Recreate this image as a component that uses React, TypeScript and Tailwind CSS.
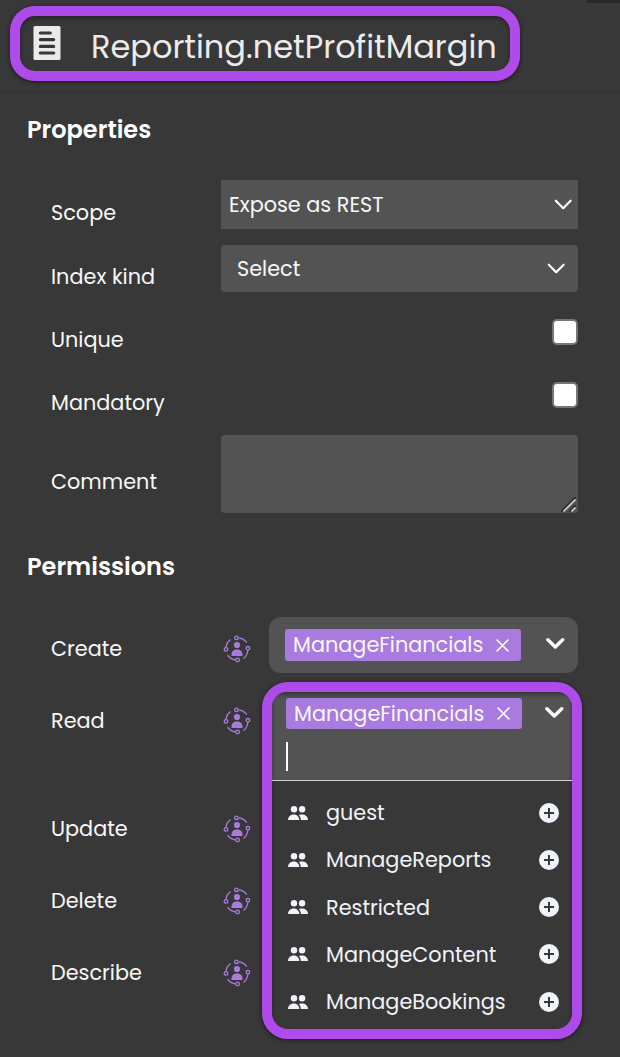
import type { ReactNode } from "react";

function DocumentIcon() {
  return (
    <svg className="block h-[34px] w-[28px]" viewBox="0 0 28 34">
      <rect x="0.5" width="27" height="34" rx="1.5" fill="#ebebeb" />
      <path d="M7.3 7h10M7.3 13.6h13.4M7.3 20.4h13.4M7.3 27h13.4" stroke="#383838" strokeWidth="3.1" strokeLinecap="round" />
    </svg>
  );
}

function Chevron({ bold = false }: { bold?: boolean }) {
  return (
    <svg className="block h-[12px] w-[20px] shrink-0" viewBox="0 0 20 12" fill="none" stroke="#fff" strokeLinecap="round" strokeLinejoin="round">
      <path d={bold ? "M2.9 1.8 10.3 9l7.4-7.2" : "M2.8 1.7 10.2 9.2l7.4-7.5"} strokeWidth={bold ? 3.4 : 2.2} />
    </svg>
  );
}

function RoleIcon() {
  return (
    <svg className="block h-[28px] w-[28px]" viewBox="0 0 28 28" fill="none" stroke="#a97be0" strokeWidth="1.3">
      <circle cx="13.4" cy="2.9" r="1.8" />
      <circle cx="24.9" cy="13.3" r="1.8" />
      <circle cx="14.6" cy="25" r="1.8" />
      <circle cx="3" cy="14.4" r="1.8" />
      <path d="M15.5 2.9c3.8.4 6.5 2.1 8.3 4.7M24.9 15.3c-.4 3.6-1.9 6.1-4.3 8.2M12.5 25c-3.5-.5-6.2-2.3-7.9-4.8M3 12.3c.4-3.3 2-6 4.5-7.8" />
      <circle cx="14" cy="10" r="3.1" fill="#a97be0" stroke="none" />
      <path d="M8.5 21v-1.5c0-3.2 2.5-5 5.5-5s5.5 1.8 5.5 5V21z" fill="#a97be0" stroke="none" />
    </svg>
  );
}

function PeopleIcon() {
  return (
    <svg className="block h-[14px] w-[20px]" viewBox="0 0 20 14" fill="#f1f3fa">
      <circle cx="6" cy="3.3" r="3.2" />
      <circle cx="14.1" cy="3.3" r="3.2" />
      <path d="M0 14c0-3.2 2.6-5.4 5.8-5.4 2.9 0 5.3 2 5.5 5.4z" />
      <path d="M10.8 8.9c1-.3 2-.4 3-.4 3.3 0 6.2 2 6.2 5.5h-7.2c0-2.1-.7-3.8-2-5.1z" />
    </svg>
  );
}

function AddIcon() {
  return (
    <svg className="block h-[20px] w-[20px]" viewBox="0 0 20 20">
      <circle cx="10" cy="10" r="10" fill="#f1f3fa" />
      <path d="M10 5v10M5 10h10" stroke="#383838" strokeWidth="2" />
    </svg>
  );
}

function Chip({ height }: { height: string }) {
  return (
    <div className={`flex w-[236px] items-center justify-between rounded-[3px] bg-[#a97be0] pl-[8px] pr-[12px] ${height}`}>
      <span>ManageFinancials</span>
      <svg className="block h-[13px] w-[13px]" viewBox="0 0 13 13" stroke="#fff" strokeWidth="1.6" strokeLinecap="round">
        <path d="m1 1 11 11M12 1 1 12" />
      </svg>
    </div>
  );
}

function Row({ label, height, pad, children }: { label: string; height: string; pad: string; children?: ReactNode }) {
  return (
    <div className={`flex items-start ${height}`}>
      <span className={`w-[170px] shrink-0 ${pad}`}>{label}</span>
      {children}
    </div>
  );
}

function Permission({ label, height, children }: { label: string; height: string; children?: ReactNode }) {
  return (
    <Row label={label} height={height} pad="pt-[20px]">
      <div className="w-[48px] shrink-0 pl-[2px] pt-[18px]">
        <RoleIcon />
      </div>
      {children}
    </Row>
  );
}

const roles = ["guest", "ManageReports", "Restricted", "ManageContent", "ManageBookings"];

function RoleMenu() {
  return (
    <div className="absolute left-[-7px] top-[-7px] h-[357px] w-[320px] rounded-[26px] border-[10px] border-[#af4beb] bg-[#383838] shadow-[0_1px_4px_rgba(0,0,0,0.6)]">
      <div className="flex h-full flex-col overflow-hidden rounded-[15px] shadow-[inset_0_2px_4px_rgba(0,0,0,0.35)]">
        <div className="h-[89px] shrink-0 border-b border-[#cfcfcf] bg-[#535353] pl-[14px] pt-[6px] shadow-[inset_0_3px_4px_rgba(0,0,0,0.35)]">
          <div className="flex items-center">
            <Chip height="h-[31px]" />
            <div className="mb-[2px] ml-[22px]">
              <Chevron bold />
            </div>
          </div>
          <div className="mt-[13px] h-[29px] w-[2px] bg-white" />
        </div>
        <ul className="pt-[8.2px]">
          {roles.map((role) => (
            <li key={role} className="flex h-[47.2px] items-center pl-[16px] pr-[13px] text-[#f1f3fa]">
              <PeopleIcon />
              <span className="ml-[18px] flex-1 pt-[0.8px]">{role}</span>
              <AddIcon />
            </li>
          ))}
        </ul>
      </div>
    </div>
  );
}

export default function App() {
  return (
    <div className="relative h-[1057px] w-[620px] overflow-hidden bg-[#383838] font-['Poppins','Inter',sans-serif] text-[20.8px] leading-[24px] text-[#f7f7f7]">
      <div className="absolute right-0 top-0 h-[3px] w-[33px] bg-[#292929]" />
      <header className="h-[92px] border-b border-[#303030] pl-[9.5px] pt-[5.5px]">
        <div className="flex h-[75px] w-[510.5px] items-center rounded-[25px] border-[10px] border-[#af4beb] pl-[13.5px] shadow-[0_1px_4px_rgba(0,0,0,0.6),inset_0_2px_4px_rgba(0,0,0,0.4)]">
          <DocumentIcon />
          <h1 className="ml-[30px] mt-[7px] whitespace-nowrap text-[32px] leading-[40px] text-[#ebebeb]">Reporting.netProfitMargin</h1>
        </div>
      </header>

      <section className="pt-[24px]">
        <h2 className="pl-[27px] text-[24px] font-semibold leading-[28px] text-white">Properties</h2>
        <div className="pl-[51px] pr-[42px] pt-[36px]">
          <Row label="Scope" height="h-[65px]" pad="pt-[21px]">
            <div className="flex h-[49px] flex-1 items-center justify-between bg-[#535353] pl-[8px] pr-[5px]">
              <span>Expose as REST</span>
              <Chevron />
            </div>
          </Row>
          <Row label="Index kind" height="h-[63px]" pad="pt-[20px]">
            <div className="flex h-[47px] flex-1 items-center justify-between rounded-[4px] bg-[#535353] pl-[16px] pr-[12px]">
              <span>Select</span>
              <Chevron />
            </div>
          </Row>
          <Row label="Unique" height="h-[63px]" pad="pt-[20px]">
            <div className="ml-auto mt-[11px] h-[26px] w-[26px] rounded-[5px] border-2 border-[#767676] bg-white" />
          </Row>
          <Row label="Mandatory" height="h-[64px]" pad="pt-[20px]">
            <div className="ml-auto mt-[11px] h-[26px] w-[26px] rounded-[5px] border-2 border-[#767676] bg-white" />
          </Row>
          <Row label="Comment" height="h-[78px]" pad="pt-[35px]">
            <div className="flex h-[78px] flex-1 items-end justify-end rounded-[4px] bg-[#535353] pb-px pr-[2px]">
              <svg className="block h-[15px] w-[15px]" viewBox="0 0 15 15" strokeWidth="1.8">
                <path d="M.5 14.5 14.5.5M8.5 14.5l6-6" stroke="#222" />
                <path d="M2.4 14.5 14.5 2.4M10.4 14.5l4.1-4.1" stroke="#c8c8c8" />
              </svg>
            </div>
          </Row>
        </div>
      </section>

      <section className="pt-[40px]">
        <h2 className="pl-[27px] text-[24px] font-semibold leading-[28px] text-white">Permissions</h2>
        <div className="pl-[51px] pr-[42px] pt-[36px]">
          <Permission label="Create" height="h-[72px]">
            <div className="flex h-[56px] flex-1 items-center rounded-[12px] bg-[#535353] pl-[16px]">
              <Chip height="h-[32px]" />
              <div className="mb-[2px] ml-[24px]">
                <Chevron bold />
              </div>
            </div>
          </Permission>
          <Permission label="Read" height="h-[108px]">
            <div className="relative flex-1">
              <RoleMenu />
            </div>
          </Permission>
          <Permission label="Update" height="h-[72px]" />
          <Permission label="Delete" height="h-[72px]" />
          <Permission label="Describe" height="h-[72px]" />
        </div>
      </section>
    </div>
  );
}
